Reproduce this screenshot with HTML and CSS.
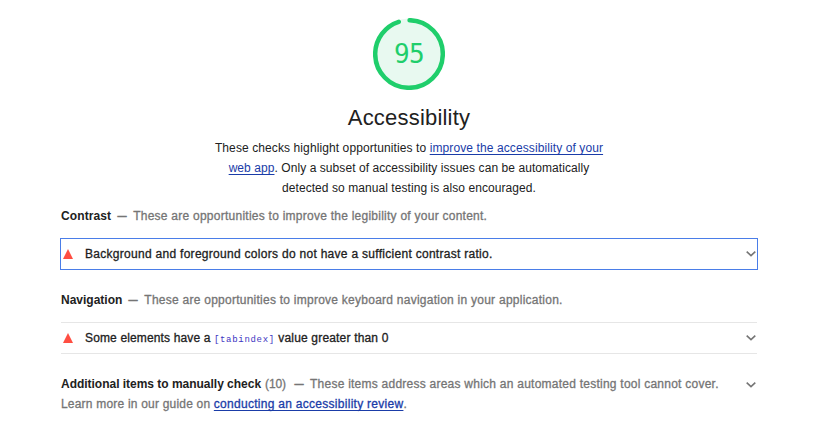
FILE: index.html
```html
<!DOCTYPE html>
<html lang="en">
<head>
<meta charset="utf-8">
<title>Accessibility</title>
<link rel="stylesheet" href="styles.css">
</head>
<body>
<main class="category">
  <header class="header">
    <div class="gauge">
      <svg class="gauge-svg" viewBox="0 0 72 72">
        <circle class="gauge-base" cx="36" cy="36" r="35.5"/>
        <circle class="gauge-arc" cx="36" cy="36" r="33.8" pathLength="100" stroke-dasharray="94.8 100" transform="rotate(-89 36 36)"/>
      </svg>
      <span class="score">95</span>
    </div>
    <h1 class="title">Accessibility</h1>
    <p class="description"><span class="l1">These checks highlight opportunities to <a href="#">improve the accessibility of your</a></span><br><span class="l2"><a href="#">web app</a>. Only a subset of accessibility issues can be automatically</span><br><span class="l2">detected so manual testing is also encouraged.</span></p>
  </header>

  <section class="group">
    <div class="group-head"><b class="name n1">Contrast</b><span class="dash">—</span><span class="g1">These are opportunities to improve the legibility of your content.</span></div>
    <div class="audit focused">
      <svg class="tri" viewBox="0 0 10 10"><path d="M5 0L10 10H0Z"/></svg>
      <span class="audit-title"><span class="a1">Background and foreground colors do not have a sufficient contrast ratio.</span></span>
      <svg class="chev" viewBox="0 0 10 6"><path d="M.7 .7L5 4.6L9.3 .7"/></svg>
    </div>
  </section>

  <section class="group">
    <div class="group-head"><b class="name">Navigation</b><span class="dash">—</span><span class="g1">These are opportunities to improve keyboard navigation in your application.</span></div>
    <div class="audit">
      <svg class="tri" viewBox="0 0 10 10"><path d="M5 0L10 10H0Z"/></svg>
      <span class="audit-title"><span class="a2">Some elements have a</span> <code>[tabindex]</code> <span class="a3">value greater than 0</span></span>
      <svg class="chev" viewBox="0 0 10 6"><path d="M.7 .7L5 4.6L9.3 .7"/></svg>
    </div>
  </section>

  <section class="manual">
    <div class="manual-text">
      <div class="group-head"><b class="name n3">Additional items to manually check</b><span class="count">(10)</span><span class="dash">—</span><span class="g3">These items address areas which an automated testing tool cannot cover.</span></div>
      <div class="group-head"><span class="g4">Learn more in our guide on <a class="strong" href="#">conducting an accessibility review</a>.</span></div>
    </div>
    <svg class="chev" viewBox="0 0 10 6"><path d="M.7 .7L5 4.6L9.3 .7"/></svg>
  </section>
</main>
</body>
</html>
```
FILE: styles.css
```css
* { box-sizing: border-box; }
body {
  margin: 0;
  background: #fff;
  color: #212121;
  font: 12px/20px "Liberation Sans", Arial, sans-serif;
}
.category { width: 698px; margin-left: 60px; padding-top: 18px; }
.header { display: flex; flex-direction: column; align-items: center; text-align: center; }
.gauge { display: grid; width: 72px; height: 72px; place-items: center; }
.gauge > * { grid-area: 1 / 1; }
.gauge-svg { width: 72px; height: 72px; }
.gauge-base { fill: #e8f9f0; }
.gauge-arc { fill: none; stroke: #1fce6b; stroke-width: 4.5; stroke-linecap: round; }
.score { color: #1fce6b; font: 26px/36px "DejaVu Sans Mono", monospace; letter-spacing: -.7px; padding-bottom: 1px; }
.title { margin: 12px 0 0; font-size: 22px; font-weight: 400; line-height: 32px; height: 36px; letter-spacing: .2px; }
.description { margin: 0; white-space: nowrap; }
.l1 { letter-spacing: .1px; }
.l2 { letter-spacing: .067px; }
a { color: #1a3ca8; text-decoration: underline; text-underline-offset: 1.5px; }
.group { padding: 8px 0 12px; }
.group-head { display: flex; height: 20px; padding-left: 1px; color: #757575; white-space: nowrap; -webkit-text-stroke: .3px; }
.name { color: #212121; -webkit-text-stroke: 0; }
.n1 { letter-spacing: .1px; }
.n3 { letter-spacing: -.02px; }
.g1 { letter-spacing: .25px; }
.g3 { letter-spacing: .242px; }
.g4 { letter-spacing: .2px; }
.strong { letter-spacing: .28px; -webkit-text-stroke: .3px; }
.dash { margin: 0 6px; width: 10px; transform-origin: left; transform: translateX(.5px) scaleX(.76); -webkit-text-stroke: .5px; }
.count { margin: 0 2px 0 4px; letter-spacing: -.1px; }
.audit { display: flex; align-items: center; height: 32px; margin: 12px 1px 0; padding: 0 1px 0 2px; border: solid #e6e6e6; border-width: 1px 0; }
.audit.focused { border: 1px solid #4a7de8; margin-left: 0; margin-right: 0; }
.tri { width: 10px; height: 10px; fill: #ff4e42; }
.audit-title { flex: 1; margin-left: 12px; white-space: nowrap; -webkit-text-stroke: .3px; }
.a1 { letter-spacing: .287px; }
.a2 { letter-spacing: .14px; }
.a3 { letter-spacing: .18px; }
.chev { width: 10px; height: 6px; fill: none; stroke: #757575; stroke-width: 1.6; }
code { color: #3d35c2; font: 9px/12px "Liberation Mono", monospace; letter-spacing: .7px; -webkit-text-stroke: 0; }
.manual { display: flex; padding: 8px 2px 0 0; }
.manual-text { flex: 1; }
.manual .chev { margin-top: 8px; }
```
